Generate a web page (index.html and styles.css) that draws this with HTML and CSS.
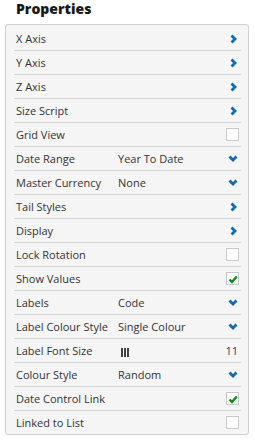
FILE: index.html
```html
<!DOCTYPE html>
<html lang="en">
<head>
    <meta charset="UTF-8">
    <meta name="viewport" content="width=device-width, initial-scale=1.0">
    <title>Properties</title>
    <link rel="stylesheet" href="styles.css">
</head>
<body>
    <h1 class="title">Properties</h1>
    <div class="panel">
        <div class="row"><span class="label">X Axis</span><span class="value"></span>
            <svg class="chev-right" viewBox="0 0 7 10"><path d="M1.5 1.5 L5 5 L1.5 8.5"/></svg></div>
        <div class="row"><span class="label">Y Axis</span><span class="value"></span>
            <svg class="chev-right" viewBox="0 0 7 10"><path d="M1.5 1.5 L5 5 L1.5 8.5"/></svg></div>
        <div class="row"><span class="label">Z Axis</span><span class="value"></span>
            <svg class="chev-right" viewBox="0 0 7 10"><path d="M1.5 1.5 L5 5 L1.5 8.5"/></svg></div>
        <div class="row"><span class="label">Size Script</span><span class="value"></span>
            <svg class="chev-right" viewBox="0 0 7 10"><path d="M1.5 1.5 L5 5 L1.5 8.5"/></svg></div>
        <div class="row"><span class="label">Grid View</span><span class="value"></span>
            <span class="checkbox"></span></div>
        <div class="row"><span class="label">Date Range</span><span class="value">Year To Date</span>
            <svg class="chev-down" viewBox="0 0 10 7"><path d="M1.5 1.5 L5 5 L8.5 1.5"/></svg></div>
        <div class="row"><span class="label">Master Currency</span><span class="value">None</span>
            <svg class="chev-down" viewBox="0 0 10 7"><path d="M1.5 1.5 L5 5 L8.5 1.5"/></svg></div>
        <div class="row"><span class="label">Tail Styles</span><span class="value"></span>
            <svg class="chev-right" viewBox="0 0 7 10"><path d="M1.5 1.5 L5 5 L1.5 8.5"/></svg></div>
        <div class="row"><span class="label">Display</span><span class="value"></span>
            <svg class="chev-right" viewBox="0 0 7 10"><path d="M1.5 1.5 L5 5 L1.5 8.5"/></svg></div>
        <div class="row"><span class="label">Lock Rotation</span><span class="value"></span>
            <span class="checkbox"></span></div>
        <div class="row"><span class="label">Show Values</span><span class="value"></span>
            <span class="checkbox"><svg class="tick" viewBox="0 0 10 10"><path d="M1.5 5.5 L4 8 L8.8 2.5"/></svg></span></div>
        <div class="row"><span class="label">Labels</span><span class="value">Code</span>
            <svg class="chev-down" viewBox="0 0 10 7"><path d="M1.5 1.5 L5 5 L8.5 1.5"/></svg></div>
        <div class="row"><span class="label">Label Colour Style</span><span class="value">Single Colour</span>
            <svg class="chev-down" viewBox="0 0 10 7"><path d="M1.5 1.5 L5 5 L8.5 1.5"/></svg></div>
        <div class="row"><span class="label">Label Font Size</span><span class="value"><span class="bars"><i></i><i></i><i></i></span></span>
            <span class="number">11</span></div>
        <div class="row"><span class="label">Colour Style</span><span class="value">Random</span>
            <svg class="chev-down" viewBox="0 0 10 7"><path d="M1.5 1.5 L5 5 L8.5 1.5"/></svg></div>
        <div class="row"><span class="label">Date Control Link</span><span class="value"></span>
            <span class="checkbox"><svg class="tick" viewBox="0 0 10 10"><path d="M1.5 5.5 L4 8 L8.8 2.5"/></svg></span></div>
        <div class="row"><span class="label">Linked to List</span><span class="value"></span>
            <span class="checkbox"></span></div>
    </div>
</body>
</html>
```

FILE: styles.css
```css
body {
    margin: 0;
    font-family: "Open Sans", Arial, sans-serif;
    color: #333;
    background: #fff;
}
.title {
    margin: 0;
    padding: 0 0 0 16px;
    height: 24px;
    line-height: 18px;
    font-size: 14px;
    font-weight: 800;
    color: #1a1a1a;
}
.panel {
    margin: 0 6px 0 5px;
    padding: 2px 7px 0 8px;
    background: #f5f5f5;
    border: 1px solid #d0d0d0;
    border-radius: 3px;
}
.row {
    display: flex;
    align-items: center;
    height: 23px;
    padding-left: 2px;
    border-bottom: 1px solid #d4d4d4;
    font-size: 11px;
}
.row:last-child {
    border-bottom: none;
}
.label {
    flex: none;
    min-width: 100px;
    white-space: nowrap;
}
.value {
    flex: 1;
    padding-left: 2px;
    white-space: nowrap;
}
.chev-right {
    width: 7px;
    height: 10px;
    margin-right: 4px;
}
.chev-down {
    width: 10px;
    height: 7px;
    margin-right: 3px;
}
.chev-right path, .chev-down path {
    fill: none;
    stroke: #1466b8;
    stroke-width: 2.8;
}
.checkbox {
    width: 11px;
    height: 11px;
    margin-right: 2px;
    border: 1px solid #c8c8c8;
    background: #fff;
    display: flex;
    align-items: center;
    justify-content: center;
}
.tick {
    width: 10px;
    height: 10px;
}
.tick path {
    fill: none;
    stroke: #148a14;
    stroke-width: 2.4;
}
.bars {
    display: inline-flex;
    gap: 1px;
    margin-left: 3px;
    vertical-align: middle;
}
.bars i {
    width: 2px;
    height: 9px;
    background: #444;
}
.number {
    margin-right: 3px;
    color: #243f66;
}
```
